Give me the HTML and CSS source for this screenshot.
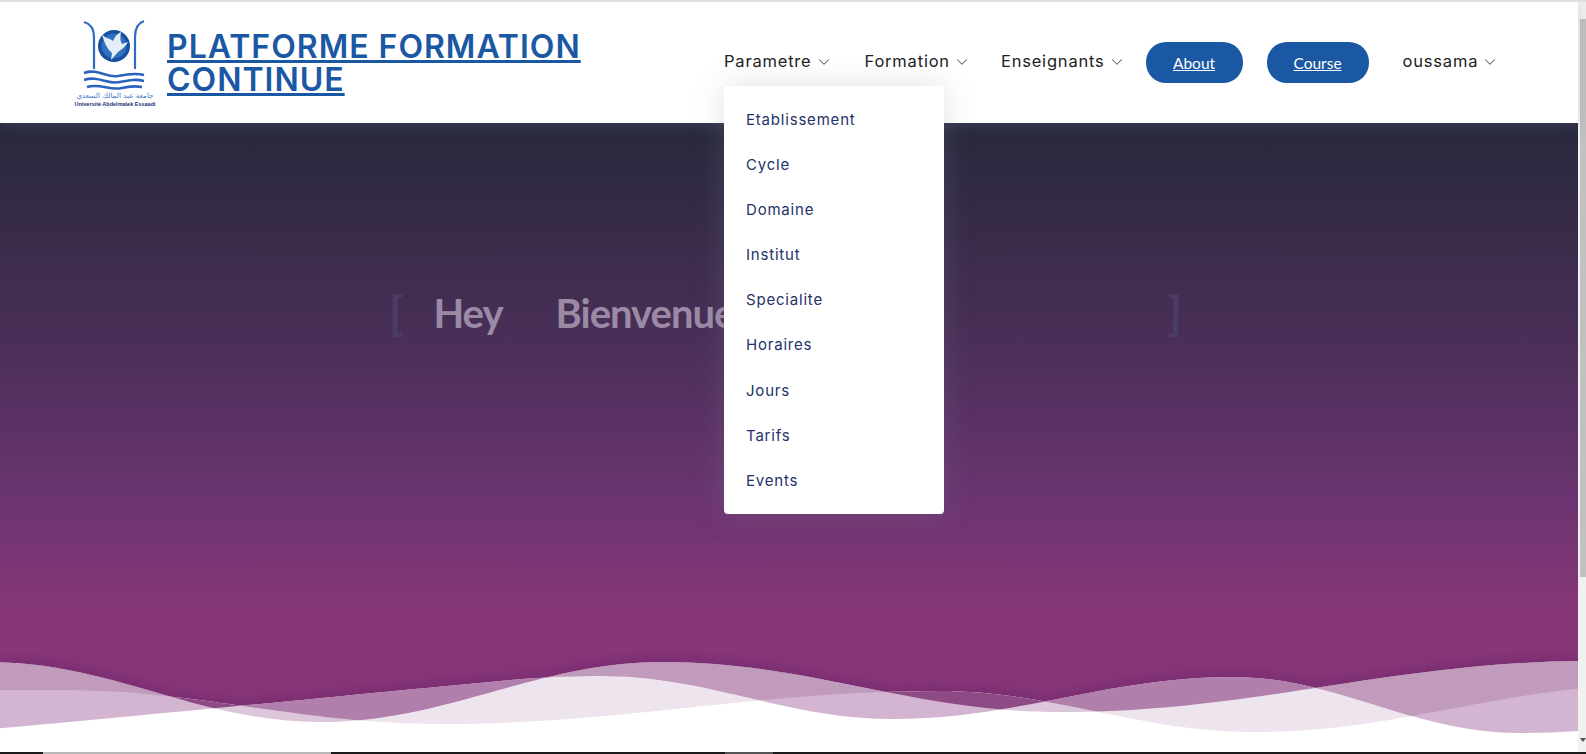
FILE: index.html
```html
<!DOCTYPE html>
<html lang="fr">

<head>
  <meta charset="UTF-8">
  <meta name="viewport" content="width=device-width, initial-scale=1.0">
  <title>Platforme Formation Continue</title>
  <link rel="stylesheet" href="styles.css">
</head>

<body>
  <div class="window">
    <div class="page">
      <header class="header">
        <svg class="logo" viewBox="0 0 84 94" width="84" height="94">
          <path class="pillar" d="M10 5C17 7 20 12 20 20V52" />
          <path class="pillar" d="M70 4C64 6 61 12 61 20V52" />
          <circle cx="40" cy="29" r="16" fill="#1a4f9e" />
          <circle cx="40" cy="29" r="12.5" fill="#2f70c0" />
          <path d="M28 17C31 22 36 21 39 24C41 19 44 16 47 15C46 20 46 24 48 27L54 25C51 30 47 33 44 35L37 43L38 36C33 32 30 25 28 17Z" fill="#e6edf7" />
          <path class="wave" d="M10 56C24 51 32 61 44 59C54 57 62 56 70 58" />
          <path class="wave" d="M10 63C24 58 34 68 46 65C56 63 62 62 70 64" />
          <path class="wave" d="M13 70C26 66 36 74 48 71C56 69 62 69 68 70" />
          <text class="logo-ar" x="41" y="81" text-anchor="middle">جامعة عبد المالك السعدي</text>
          <text class="logo-fr" x="41" y="89" text-anchor="middle">Université Abdelmalek Essaadi</text>
        </svg>
        <a class="brand" href="#">PLATFORME FORMATION CONTINUE</a>

        <nav class="nav">
          <div class="nav-item has-menu">
            <span>Parametre</span>
            <svg class="chevron" viewBox="0 0 16 16"><path d="M1.6 4.6a.5.5 0 0 1 .7 0L8 10.3l5.6-5.7a.5.5 0 0 1 .8.8l-6 6a.5.5 0 0 1-.8 0l-6-6a.5.5 0 0 1 0-.8z" /></svg>
            <ul class="dropdown">
              <li>Etablissement</li>
              <li>Cycle</li>
              <li>Domaine</li>
              <li>Institut</li>
              <li>Specialite</li>
              <li>Horaires</li>
              <li>Jours</li>
              <li>Tarifs</li>
              <li>Events</li>
            </ul>
          </div>
          <div class="nav-item">
            <span>Formation</span>
            <svg class="chevron" viewBox="0 0 16 16"><path d="M1.6 4.6a.5.5 0 0 1 .7 0L8 10.3l5.6-5.7a.5.5 0 0 1 .8.8l-6 6a.5.5 0 0 1-.8 0l-6-6a.5.5 0 0 1 0-.8z" /></svg>
          </div>
          <div class="nav-item">
            <span>Enseignants</span>
            <svg class="chevron" viewBox="0 0 16 16"><path d="M1.6 4.6a.5.5 0 0 1 .7 0L8 10.3l5.6-5.7a.5.5 0 0 1 .8.8l-6 6a.5.5 0 0 1-.8 0l-6-6a.5.5 0 0 1 0-.8z" /></svg>
          </div>
          <a class="pill pill-about" href="#">About</a>
          <a class="pill pill-course" href="#">Course</a>
          <div class="nav-item nav-user">
            <span>oussama</span>
            <svg class="chevron" viewBox="0 0 16 16"><path d="M1.6 4.6a.5.5 0 0 1 .7 0L8 10.3l5.6-5.7a.5.5 0 0 1 .8.8l-6 6a.5.5 0 0 1-.8 0l-6-6a.5.5 0 0 1 0-.8z" /></svg>
          </div>
        </nav>
      </header>

      <section class="hero">
        <div class="typed">
          <span class="bracket">[</span>
          <h2 class="typed-text"><span>Hey</span><span>Bienvenue</span></h2>
          <span class="bracket">]</span>
        </div>

        <svg class="waves" viewBox="0 650 1578 102" width="1578" height="102">
          <defs>
            <clipPath id="wave-a"><path d="M0 690H60C201 690 299 724 440 724C625 724 754 691 939 691C1056 691 1138 732 1255 732C1401 732 1504 685 1650 685V650H0Z" /></clipPath>
            <clipPath id="wave-b"><path d="M-30 731C120 718 360 694 500 681C540 677 570 676 602 676C710 676 785 719 893 719C1018 719 1107 677 1232 677C1338 677 1412 733 1518 733C1560 733 1600 730 1640 725V650H-30Z" /></clipPath>
            <clipPath id="wave-c"><path d="M-10 662C112 662 198 722 320 722C447 722 536 662 663 662C810 662 913 712 1060 712C1256 712 1394 661 1590 661V650H-10Z" /></clipPath>
            <mask id="below-waves" maskUnits="userSpaceOnUse" x="0" y="650" width="1578" height="104">
              <rect x="0" y="650" width="1578" height="104" fill="#fff" />
              <g clip-path="url(#wave-a)">
                <g clip-path="url(#wave-b)">
                  <rect x="0" y="650" width="1578" height="104" fill="#000" clip-path="url(#wave-c)" />
                </g>
              </g>
            </mask>
            <filter id="wave-shadow" x="0" y="-20%" width="100%" height="140%">
              <feGaussianBlur stdDeviation="9" />
            </filter>
          </defs>

          <!-- darkening of the purple just over the waves -->
          <g filter="url(#wave-shadow)" opacity="0.28">
            <rect x="0" y="650" width="1578" height="104" fill="#3a0f4a" mask="url(#below-waves)" />
          </g>
          <rect x="0" y="650" width="1578" height="104" fill="#fff" mask="url(#below-waves)" />

          <!-- one fill per overlap of the three wave shapes -->
          <g mask="url(#below-waves)">
            <rect class="band" fill="#eee4ee" clip-path="url(#wave-a)" />
            <rect class="band" fill="#d3b5d2" clip-path="url(#wave-b)" />
            <rect class="band" fill="#dcc6da" clip-path="url(#wave-c)" />
            <g clip-path="url(#wave-a)"><rect class="band" fill="#c19bbc" clip-path="url(#wave-b)" /></g>
            <g clip-path="url(#wave-a)"><rect class="band" fill="#b07fab" clip-path="url(#wave-c)" /></g>
            <g clip-path="url(#wave-b)"><rect class="band" fill="#8e4a85" clip-path="url(#wave-c)" /></g>
          </g>
        </svg>
      </section>
    </div>

    <div class="scrollbar">
      <span class="arrow arrow-up"></span>
      <span class="thumb"></span>
      <span class="arrow arrow-down"></span>
    </div>
  </div>

  <div class="taskbar">
    <span class="task-a"></span>
    <span class="task-b"></span>
    <span class="task-c"></span>
    <span class="task-d"></span>
    <span class="task-e"></span>
  </div>
</body>

</html>
```

FILE: styles.css
```css
* {
  box-sizing: border-box;
}

body {
  margin: 0;
  height: 754px;
  overflow: hidden;
  display: flex;
  flex-direction: column;
  background: #fff;
  font-family: Inter, "Noto Sans", sans-serif;
}

.window {
  display: flex;
  flex: 1;
  min-height: 0;
}

.page {
  width: 1578px;
  display: flex;
  flex-direction: column;
}

/* header */

.header {
  height: 123px;
  display: flex;
  align-items: center;
  padding: 0 0 0 74px;
  border-top: 2px solid #e0e0e0;
  background: #fff;
  position: relative;
  z-index: 2;
  box-shadow: 0 2px 15px rgba(127, 137, 161, 0.25);
}

.logo {
  flex: none;
  margin-top: 2px;
}

.pillar {
  fill: none;
  stroke: #2f6cc0;
  stroke-width: 2.2;
}

.wave {
  fill: none;
  stroke: #2a63bd;
  stroke-width: 2.6;
}

.logo-ar {
  font-family: "DejaVu Sans", sans-serif;
  font-size: 7.2px;
  fill: #3f7bc9;
}

.logo-fr {
  font-family: "Liberation Sans", sans-serif;
  font-size: 5.5px;
  font-weight: 700;
  fill: #1b2f7a;
}

.brand {
  width: 430px;
  margin-left: 9px;
  font-size: 32px;
  line-height: 33px;
  font-weight: 600;
  letter-spacing: 1px;
  color: #1b58a3;
  text-decoration: underline;
  text-decoration-thickness: 3px;
  text-underline-offset: 2px;
}

.nav {
  display: flex;
  align-items: center;
  margin-left: 127px;
  font-size: 16.5px;
  letter-spacing: 0.8px;
  color: #222;
}

.nav-item {
  position: relative;
  display: flex;
  align-items: center;
  gap: 6px;
  margin-right: 33px;
  margin-top: -3px;
}

.chevron {
  width: 12px;
  height: 12px;
  fill: #444;
  margin-top: 2px;
}

.has-menu {
  margin-right: 35px;
}

.pill {
  height: 41px;
  display: flex;
  align-items: center;
  justify-content: center;
  background: #1a58a4;
  border-radius: 20px;
  color: #fff;
  font-family: Lato, "Liberation Sans", sans-serif;
  font-size: 15.5px;
  letter-spacing: 0;
}

.pill-about {
  width: 97px;
  margin-left: -10px;
}

.pill-course {
  width: 102px;
  margin-left: 24px;
}

.nav-user {
  margin-left: 34px;
  margin-right: 0;
}

.dropdown {
  position: absolute;
  top: 35px;
  left: 0;
  width: 220px;
  height: 428px;
  margin: 0;
  padding: 11px 22px;
  list-style: none;
  background: #fff;
  border-radius: 4px;
  box-shadow: 0 0 30px rgba(127, 137, 161, 0.25);
  font-size: 15px;
  color: #233268;
}

.dropdown li {
  height: 45.1px;
  line-height: 45px;
}

/* hero */

.hero {
  flex: 1;
  position: relative;
  padding: 167px 0 0 389px;
  background: linear-gradient(#27283b 0, #4a2f58 220px, #6a3470 370px, #873679 490px);
}

.typed {
  width: 793px;
  display: flex;
  align-items: center;
  height: 46px;
}

.bracket {
  font-family: Lato, "Liberation Sans", sans-serif;
  font-size: 46px;
  font-weight: 700;
  line-height: 46px;
  color: #4b3c63;
}

.typed-text {
  flex: 1;
  display: flex;
  gap: 53px;
  margin: 0 0 0 30px;
  font-family: Lato, "Liberation Sans", sans-serif;
  font-size: 40px;
  font-weight: 700;
  letter-spacing: -1px;
  color: #9b8aa6;
}

.waves {
  position: absolute;
  left: 0;
  bottom: 0;
  display: block;
}

.band {
  x: 0;
  y: 650px;
  width: 1578px;
  height: 104px;
}

/* scrollbar and what shows of the taskbar */

.scrollbar {
  width: 8px;
  display: flex;
  flex-direction: column;
  background: #f1f1f1;
}

.arrow {
  height: 19px;
  flex: none;
}

.arrow-up {
  border-top: 2px solid #e0e0e0;
}

.thumb {
  height: 558px;
  margin-left: 2px;
  background: #c1c1c1;
}

.arrow-down {
  margin-top: auto;
  position: relative;
}

.arrow-down::after {
  content: "";
  position: absolute;
  left: 2px;
  bottom: 7px;
  border: 3px solid transparent;
  border-top: 4px solid #505050;
}

.taskbar {
  height: 2px;
  display: flex;
  flex: none;
  background: #1a1a1a;
}

.task-a {
  width: 43px;
}

.task-b {
  width: 288px;
  background: #b8b8b8;
}

.task-c {
  width: 394px;
}

.task-d {
  width: 48px;
  background: #555;
}

.task-e {
  flex: 1;
}
```
